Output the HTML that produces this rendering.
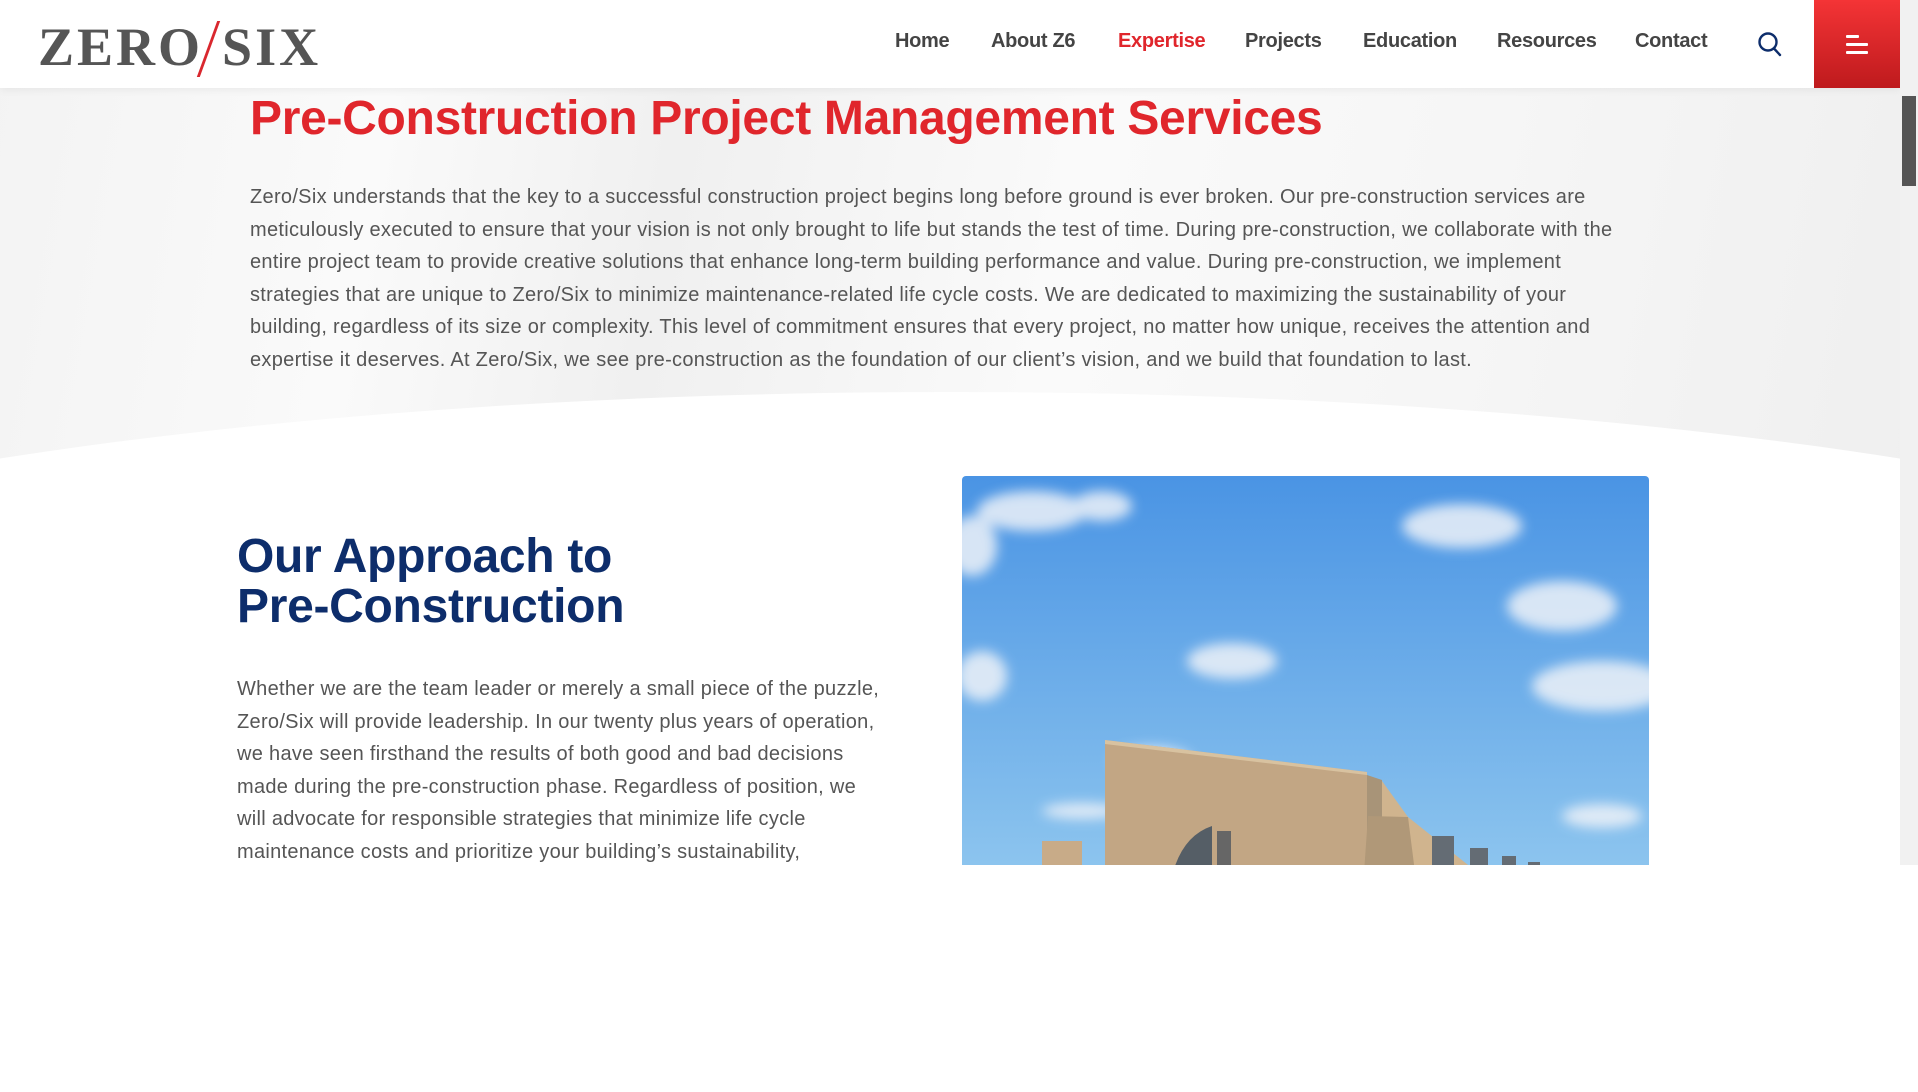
<!DOCTYPE html>
<html><head><meta charset="utf-8"><style>
*{margin:0;padding:0;box-sizing:border-box}
html,body{width:1918px;height:865px;overflow:hidden;background:#fff;font-family:"Liberation Sans",Arial,sans-serif}
.bgtop{position:absolute;left:0;top:0;width:1900px;height:620px;background:linear-gradient(100deg,#f3f3f3 0%,#fafafa 20%,#f0f0f0 35%,#fafafa 55%,#f6f6f6 75%,#efefef 100%)}
.curve{position:absolute;left:-670px;top:392px;width:3240px;height:700px;border-radius:50%;background:#fff}
header{position:absolute;left:0;top:0;width:1900px;height:88px;background:#fff;box-shadow:0 2px 8px rgba(0,0,0,.06)}
.logo{position:absolute;left:38px;top:16px;font-family:"Liberation Serif",serif;font-weight:bold;font-size:54px;color:#555;letter-spacing:3px}
.logo .sl{display:inline-block;width:3px;height:56px;background:#d9272e;transform:skewX(-20deg);vertical-align:-12px;margin:0 12px 0 4px}
nav a{position:absolute;top:30px;font-size:20px;color:#444;font-weight:bold;text-decoration:none;letter-spacing:-.3px}
.red{position:absolute;left:1814px;top:0;width:86px;height:88px;background:linear-gradient(#f43436,#be1a1d)}
.red i{position:absolute;height:3px;background:#fff;border-radius:1px}
.sb{position:absolute;left:1900px;top:0;width:18px;height:865px;background:#f1f1f1}
.sb .th{position:absolute;left:2px;top:96px;width:14px;height:90px;background:#555}
h1{position:absolute;left:250px;top:91px;font-size:48px;color:#e0262c;font-weight:bold;letter-spacing:-.3px;white-space:nowrap}
.p1{position:absolute;left:250px;top:181px;width:1500px;font-size:20px;letter-spacing:.3px;line-height:32.5px;color:#555;white-space:nowrap}
h2{position:absolute;left:237px;top:532px;font-size:48px;line-height:50px;color:#0d2d6b;font-weight:bold;letter-spacing:-.3px}
.p2{position:absolute;left:237px;top:673px;font-size:20px;letter-spacing:.3px;line-height:32.5px;color:#555;white-space:nowrap}
.img{position:absolute;left:962px;top:476px;width:687px;height:389px;border-radius:4px 4px 0 0;overflow:hidden}
</style></head><body>
<div class="bgtop"></div><div class="curve"></div>
<header>
<div class="logo">ZERO<span class="sl"></span>SIX</div>
<nav>
<a style="left:895px">Home</a>
<a style="left:991px">About Z6</a>
<a style="left:1118px;color:#e0262c">Expertise</a>
<a style="left:1245px">Projects</a>
<a style="left:1363px">Education</a>
<a style="left:1497px">Resources</a>
<a style="left:1635px">Contact</a>
</nav>
<svg style="position:absolute;left:1757px;top:31px" width="26" height="28" viewBox="0 0 26 28"><circle cx="11" cy="11" r="8.5" fill="none" stroke="#0d2d6b" stroke-width="2.4"/><line x1="17" y1="17.5" x2="23" y2="24" stroke="#0d2d6b" stroke-width="2.4" stroke-linecap="round"/></svg>
<div class="red"><i style="left:32px;top:35px;width:13px"></i><i style="left:32px;top:43px;width:22px"></i><i style="left:32px;top:51px;width:22px"></i></div>
</header>
<div class="sb"><div class="th"></div></div>
<h1>Pre-Construction Project Management Services</h1>
<div class="p1">Zero/Six understands that the key to a successful construction project begins long before ground is ever broken. Our pre-construction services are<br>meticulously executed to ensure that your vision is not only brought to life but stands the test of time. During pre-construction, we collaborate with the<br>entire project team to provide creative solutions that enhance long-term building performance and value. During pre-construction, we implement<br>strategies that are unique to Zero/Six to minimize maintenance-related life cycle costs. We are dedicated to maximizing the sustainability of your<br>building, regardless of its size or complexity. This level of commitment ensures that every project, no matter how unique, receives the attention and<br>expertise it deserves. At Zero/Six, we see pre-construction as the foundation of our client’s vision, and we build that foundation to last.</div>
<h2>Our Approach to<br>Pre-Construction</h2>
<div class="p2">Whether we are the team leader or merely a small piece of the puzzle,<br>Zero/Six will provide leadership. In our twenty plus years of operation,<br>we have seen firsthand the results of both good and bad decisions<br>made during the pre-construction phase. Regardless of position, we<br>will advocate for responsible strategies that minimize life cycle<br>maintenance costs and prioritize your building’s sustainability,</div>
<div class="img"><svg width="687" height="389" viewBox="0 0 687 389">
<defs><linearGradient id="sk" x1="0" y1="0" x2="0" y2="1"><stop offset="0" stop-color="#4a94e4"/><stop offset="1" stop-color="#8cc4ee"/></linearGradient>
<filter id="bl"><feGaussianBlur stdDeviation="6"/></filter></defs>
<rect width="687" height="389" fill="url(#sk)"/>
<g fill="#eef2f8" opacity=".85" filter="url(#bl)">
<ellipse cx="70" cy="35" rx="55" ry="20"/><ellipse cx="140" cy="30" rx="30" ry="15"/><ellipse cx="10" cy="70" rx="25" ry="30"/>
<ellipse cx="500" cy="50" rx="60" ry="22"/><ellipse cx="600" cy="130" rx="55" ry="25"/><ellipse cx="640" cy="210" rx="70" ry="25"/>
<ellipse cx="270" cy="185" rx="45" ry="18"/><ellipse cx="190" cy="285" rx="40" ry="14"/><ellipse cx="120" cy="335" rx="40" ry="8"/>
<ellipse cx="640" cy="340" rx="40" ry="12"/><ellipse cx="20" cy="200" rx="25" ry="25"/><ellipse cx="360" cy="325" rx="30" ry="12"/>
</g>
<polygon points="143,264 405,296 408,440 143,440" fill="#c2a684"/>
<polygon points="143,264 405,296 405,299 143,268" fill="#d8c2a0"/>
<polygon points="420,305 446,341 635,492 635,440 420,440" fill="#d0b48e"/>
<polygon points="405,299 420,304 420,440 405,440" fill="#a89478"/>
<polygon points="400,425 406,340 446,341 456,420" fill="#b09878"/>
<rect x="80" y="365" width="40" height="40" fill="#c8ab88"/>
<path d="M210 400 Q220 360 250 350 L250 400 Z" fill="#555e66"/>
<rect x="255" y="355" width="14" height="45" fill="#666"/>
<g fill="#646c74"><rect x="470" y="360" width="22" height="40"/><rect x="508" y="372" width="18" height="30"/><rect x="540" y="380" width="14" height="22"/><rect x="566" y="386" width="12" height="16"/></g>
</svg></div>
</body></html>
